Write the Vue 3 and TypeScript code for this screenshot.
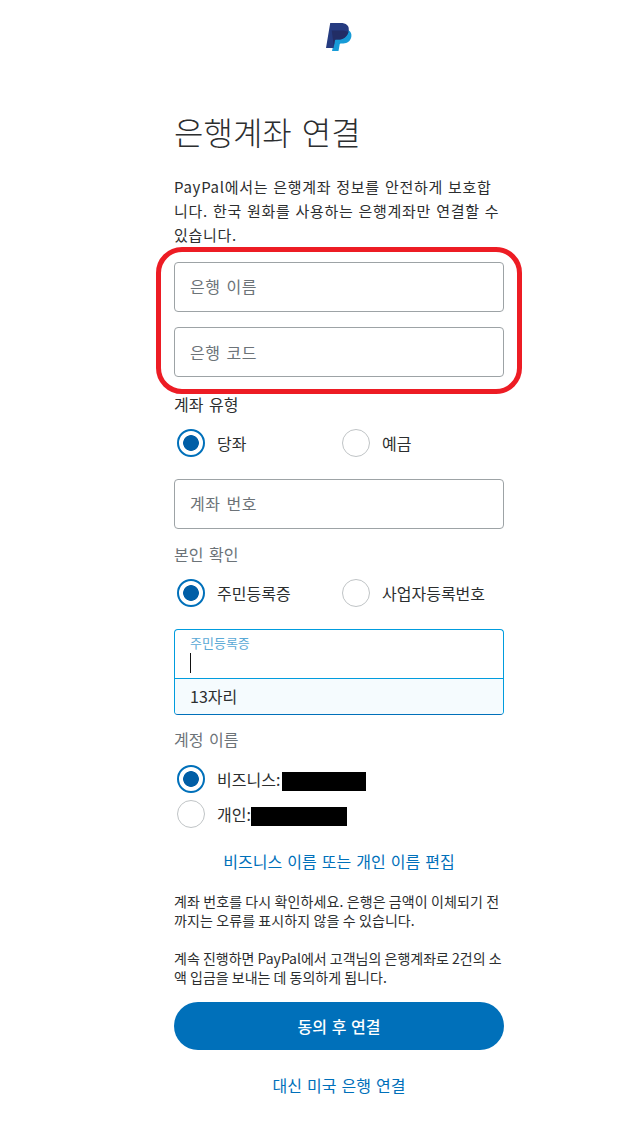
<script setup lang="ts">
interface Radio { label: string; checked: boolean }
const accountTypes: Radio[] = [
  { label: '당좌', checked: true },
  { label: '예금', checked: false },
]
const idTypes: Radio[] = [
  { label: '주민등록증', checked: true },
  { label: '사업자등록번호', checked: false },
]
</script>

<template>
  <main class="page">
    <div class="logo">
      <svg width="26" height="28" viewBox="0 0 26 28">
        <path fill="#179bd7" d="M21 6.500c3.500 1.300 5 4 4.300 7.500-1 4.400-4 6.400-8 6.400h-2.600c-.5 0-.9.400-1 .9L12.500 28H6l1.200-5.500L12 8z" />
        <path fill="#253b80" d="M4.200 0h10.300c5.500 0 9.100 2.500 8.200 7.800-1 5.700-5.200 8.800-10.700 8.800H10c-.6 0-1 .4-1.100.9L7.600 25H0z" />
        <path fill="#222d65" d="M5.700 7.500h9c2.700 0 5.700.2 7.700 1.400-1.300 4.900-5.200 7.700-10.400 7.700H10c-.6 0-1 .4-1.100.9L7.800 23z" />
      </svg>
    </div>

    <h1 class="title">은행계좌 연결</h1>
    <p class="intro">PayPal에서는 은행계좌 정보를 안전하게 보호합니다. 한국 원화를 사용하는 은행계좌만 연결할 수 있습니다.</p>

    <div class="highlighted">
      <div class="field">은행 이름</div>
      <div class="field second">은행 코드</div>
      <div class="annotation"></div>
    </div>

    <div class="label dark first-label">계좌 유형</div>
    <div class="radio-row row-a">
      <div v-for="r in accountTypes" :key="r.label" class="radio-cell">
        <span class="radio" :class="{ on: r.checked }"></span>
        <span class="radio-text">{{ r.label }}</span>
      </div>
    </div>

    <div class="field account">계좌 번호</div>

    <div class="label id-label">본인 확인</div>
    <div class="radio-row row-b">
      <div v-for="r in idTypes" :key="r.label" class="radio-cell">
        <span class="radio" :class="{ on: r.checked }"></span>
        <span class="radio-text">{{ r.label }}</span>
      </div>
    </div>

    <div class="focus-field">
      <div class="focus-top">
        <div class="float-label">주민등록증</div>
        <span class="caret"></span>
      </div>
      <div class="hint">13자리</div>
    </div>

    <div class="label name-label">계정 이름</div>
    <div class="names">
      <div class="name-row">
        <span class="radio on"></span>
        <span class="radio-text">비즈니스:</span>
        <span class="mask m1"></span>
      </div>
      <div class="name-row second-name">
        <span class="radio"></span>
        <span class="radio-text">개인:</span>
        <span class="mask m2"></span>
      </div>
    </div>

    <a class="link edit">비즈니스 이름 또는 개인 이름 편집</a>

    <p class="note n1">계좌 번호를 다시 확인하세요. 은행은 금액이 이체되기 전까지는 오류를 표시하지 않을 수 있습니다.</p>
    <p class="note n2">계속 진행하면 PayPal에서 고객님의 은행계좌로 2건의 소액 입금을 보내는 데 동의하게 됩니다.</p>

    <button class="cta" type="button">동의 후 연결</button>
    <a class="link us">대신 미국 은행 연결</a>
  </main>
</template>

<style>
html, body { margin: 0; background: #fff; }
</style>

<style scoped>
.page {
  box-sizing: border-box;
  width: 625px;
  height: 1128px;
  padding-left: 174px;
  overflow: hidden;
  font-family: "Noto Sans CJK KR", "Open Sans", sans-serif;
  font-weight: 400;
  color: #2c2e2f;
}
.page > * { width: 330px; }
.logo { display: flex; justify-content: center; padding-top: 23px; height: 29px; }
.title {
  margin: 56px 0 0;
  font-size: 32px;
  line-height: 46px;
  font-weight: 300;
  word-spacing: 3px;
  color: #2c2e2f;
}
.page > .intro {
  width: 326px;
  margin: 21px 0 0;
  font-size: 15px;
  line-height: 24px;
  letter-spacing: 0.7px;
  word-spacing: 1px;
}
.highlighted { position: relative; margin-top: 15px; }
.field {
  box-sizing: border-box;
  height: 50px;
  border: 1px solid #9da3a6;
  border-radius: 4px;
  padding-left: 15px;
  font-size: 16px;
  line-height: 47px;
  letter-spacing: 0.5px;
  word-spacing: 2px;
  color: #6c7378;
}
.second { margin-top: 15px; line-height: 49px; }
.annotation {
  position: absolute;
  left: -18px;
  top: -15px;
  width: 366px;
  height: 147px;
  box-sizing: border-box;
  border: 5px solid #ed1c24;
  border-radius: 26px;
}
.label { font-size: 16px; line-height: 22px; word-spacing: 2px; color: #6c7378; }
.dark { color: #2c2e2f; }
.first-label { margin-top: 16px; }
.radio-row { display: grid; grid-template-columns: 165px 165px; }
.row-a { margin-top: 13px; }
.row-b { margin-top: 13px; }
.radio-cell { display: flex; align-items: center; height: 30px; padding-left: 3px; }
.radio {
  box-sizing: border-box;
  flex: none;
  width: 28px;
  height: 28px;
  border: 1px solid #c0c4c6;
  border-radius: 50%;
  background: #fff;
}
.radio.on {
  border: 2px solid #0070ba;
  background: radial-gradient(circle, #005ea6 0 7.500px, #fff 8.200px);
}
.radio-text { margin-left: 12px; font-size: 16px; white-space: nowrap; }
.account { margin-top: 21px; }
.id-label { margin-top: 14px; }
.focus-field {
  box-sizing: border-box;
  margin-top: 21px;
  height: 86px;
  border: 1px solid #009cde;
  border-bottom-color: #0070ba;
  border-radius: 4px;
  overflow: hidden;
}
.focus-top {
  box-sizing: border-box;
  height: 49px;
  border-bottom: 1px solid #009cde;
  padding: 5px 15px 0;
}
.float-label { font-size: 13px; line-height: 16px; color: #5aa9d6; }
.caret { display: block; width: 1px; height: 20px; margin-top: 2px; background: #111; }
.hint {
  box-sizing: border-box;
  height: 35px;
  padding-left: 15px;
  background: #f5fbfe;
  font-size: 16px;
  line-height: 34px;
}
.name-label { margin-top: 13px; }
.names { margin-top: 14px; }
.name-row { display: flex; align-items: center; height: 30px; padding-left: 3px; }
.second-name { margin-top: 5px; }
.mask { background: #000; height: 19px; margin-top: 4px; }
.m1 { width: 84px; margin-left: 2px; }
.m2 { width: 96px; }
.link { display: block; text-align: center; color: #0070ba; font-size: 16px; word-spacing: 1.500px; }
.edit { margin-top: 20px; line-height: 24px; }
.note { margin: 0; font-size: 14px; line-height: 19px; }
.n1 { margin-top: 19px; letter-spacing: 0.1px; }
.n2 { margin-top: 19px; }
.cta {
  display: block;
  margin-top: 15px;
  height: 48px;
  border: 0;
  border-radius: 24px;
  background: #0070ba;
  color: #fff;
  font: inherit;
  font-size: 16px;
  font-weight: 500;
  word-spacing: 1px;
}
.us { margin-top: 23px; line-height: 24px; }
</style>
